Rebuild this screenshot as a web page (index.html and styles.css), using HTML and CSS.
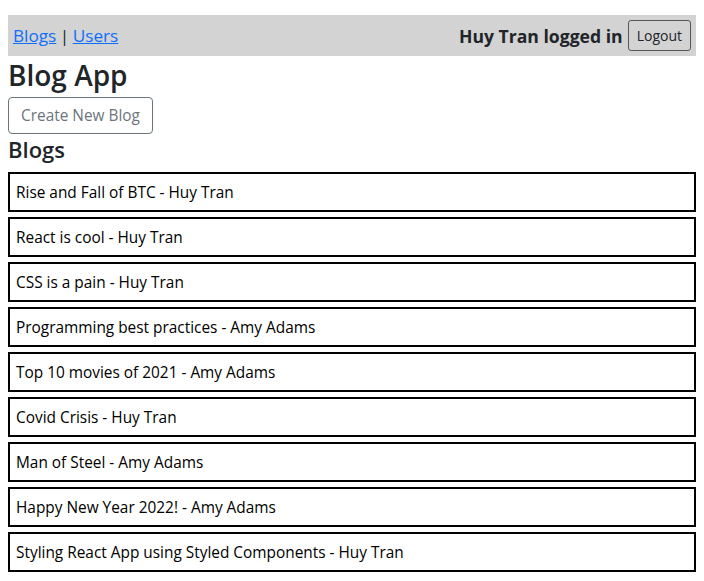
FILE: index.html
```html
<!DOCTYPE html>
<html lang="en">
<head>
<meta charset="utf-8">
<title>Blog App</title>
<link rel="stylesheet" href="styles.css">
</head>
<body>
<div class="app">
  <nav class="nav">
    <div class="nav-links"><a href="#">Blogs</a> | <a href="#">Users</a></div>
    <div class="nav-user"><span class="user-text">Huy Tran logged in</span><button class="logout">Logout</button></div>
  </nav>
  <h1 class="title">Blog App</h1>
  <button class="create">Create New Blog</button>
  <h2 class="section">Blogs</h2>
  <ul class="blog-list">
    <li class="blog">Rise and Fall of BTC - Huy Tran</li>
    <li class="blog">React is cool - Huy Tran</li>
    <li class="blog">CSS is a pain - Huy Tran</li>
    <li class="blog">Programming best practices - Amy Adams</li>
    <li class="blog">Top 10 movies of 2021 - Amy Adams</li>
    <li class="blog">Covid Crisis - Huy Tran</li>
    <li class="blog">Man of Steel - Amy Adams</li>
    <li class="blog">Happy New Year 2022! - Amy Adams</li>
    <li class="blog">Styling React App using Styled Components - Huy Tran</li>
  </ul>
</div>
</body>
</html>
```
FILE: styles.css
```css
html, body {
  margin: 0;
  padding: 0;
  background: #fff;
}
body {
  font-family: "Open Sans", "Noto Sans", sans-serif;
  color: #212529;
  font-size: 16px;
}
.app {
  padding: 15px 8px 0 8px;
}
.nav {
  background: #d3d3d3;
  height: 41px;
  padding: 0 5px;
  display: flex;
  align-items: center;
  justify-content: space-between;
  font-size: 17.2px;
  box-sizing: border-box;
}
.nav-links {
  word-spacing: -1px;
}
.nav-links a {
  color: #0d6efd;
  text-decoration: underline;
}
.nav-user {
  display: flex;
  align-items: center;
  gap: 5px;
}
.user-text {
  font-weight: 700;
  font-size: 17.6px;
}
.logout {
  font-family: inherit;
  font-size: 14px;
  color: #212529;
  background: transparent;
  border: 1px solid #555;
  border-radius: 3px;
  height: 31px;
  padding: 0 8px;
}
.title {
  font-size: 28px;
  font-weight: 600;
  margin: 0;
  line-height: 38px;
}
.create {
  font-family: inherit;
  font-size: 15.4px;
  color: #6c757d;
  background: #fff;
  border: 1px solid #6c757d;
  border-radius: 4px;
  height: 37px;
  padding: 0 12px;
  margin-top: 3px;
  display: block;
}
.section {
  font-size: 22px;
  font-weight: 600;
  margin: 0;
  line-height: 30px;
}
.blog-list {
  list-style: none;
  margin: 8px 0 0 0;
  padding: 0;
  display: flex;
  flex-direction: column;
  gap: 5px;
}
.blog {
  border: 2px solid #000;
  height: 40px;
  box-sizing: border-box;
  display: flex;
  align-items: center;
  padding-left: 6px;
  font-size: 15.4px;
  color: #000;
}
```
